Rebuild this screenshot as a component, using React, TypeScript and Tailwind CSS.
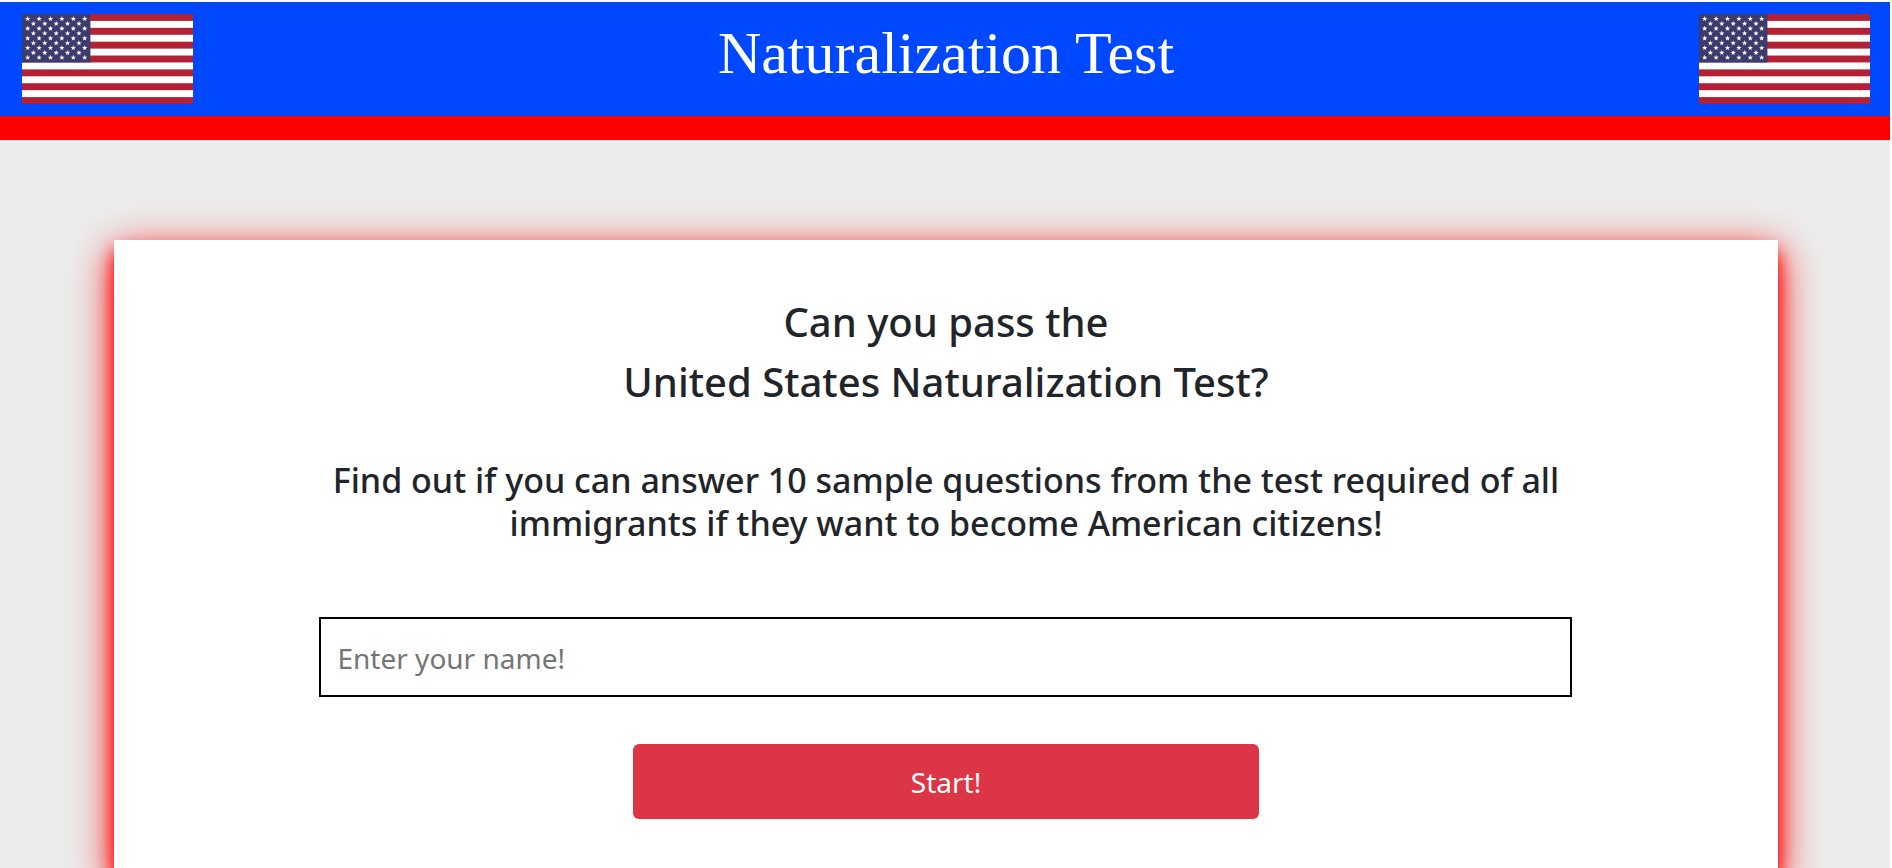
const STRIPES = [0, 1, 2, 3, 4, 5, 6];
const STAR_ROWS = [0, 1, 2, 3, 4, 5, 6, 7, 8];

function starPoints(cx: number, cy: number, r: number) {
  return Array.from({ length: 10 }, (_, i) => {
    const radius = i % 2 === 0 ? r : r * 0.42;
    const angle = (Math.PI / 5) * i - Math.PI / 2;
    return `${(cx + radius * Math.cos(angle)).toFixed(2)},${(cy + radius * Math.sin(angle)).toFixed(2)}`;
  }).join(" ");
}

function Flag() {
  return (
    <svg
      className="h-[90px] w-[171px] shrink-0"
      viewBox="0 0 1235 650"
      preserveAspectRatio="none"
      role="img"
      aria-label="Flag of the United States"
    >
      <rect width="1235" height="650" fill="#fff" />
      {STRIPES.map((i) => (
        <rect key={i} y={i * 100} width="1235" height="50" fill="#b22234" />
      ))}
      <rect width="494" height="350" fill="#3c3b6e" />
      {STAR_ROWS.map((row) =>
        Array.from({ length: row % 2 === 0 ? 6 : 5 }, (_, col) => (
          <polygon
            key={`${row}-${col}`}
            fill="#fff"
            points={starPoints((row % 2 === 0 ? 41.2 : 82.3) + col * 82.3, 35 + row * 35, 20)}
          />
        )),
      )}
    </svg>
  );
}

export default function App() {
  return (
    <div className="relative min-h-screen overflow-hidden border-t-2 border-white bg-[#ececec] font-['Noto_Sans',sans-serif] text-[#212529] after:absolute after:inset-y-0 after:right-0 after:w-0.5 after:bg-white">
      <header className="flex items-start justify-between border-b-24 border-[#ff0000] bg-[#0048ff] px-[22px] py-3">
        <Flag />
        <p className="font-['Liberation_Serif',serif] text-[60px] leading-[78px] text-white">Naturalization Test</p>
        <Flag />
      </header>

      <main className="mx-auto mt-[100px] w-[88%] bg-white px-6 pt-[52px] pb-14 text-center shadow-[0_12px_16px_0_#ff0000,0_12px_40px_0_#ff0000]">
        <h1 className="text-[40px] leading-[60px] font-medium">
          Can you pass the
          <br />
          United States Naturalization Test?
        </h1>
        <form className="mx-auto flex w-full max-w-[1253px] flex-col items-center" onSubmit={(e) => e.preventDefault()}>
          <h2 className="mt-[47px] text-[34px] leading-[43px] font-medium">
            Find out if you can answer 10 sample questions from the test required of all immigrants if they want to
            become American citizens!
          </h2>
          <input
            type="text"
            aria-label="Your name"
            placeholder="Enter your name!"
            className="mt-[72px] h-20 w-full border-2 border-black px-4 pt-0.5 text-[28px] placeholder:text-[#757575]"
          />
          <button type="submit" className="mt-[47px] h-[75px] w-1/2 rounded-md bg-[#dc3545] text-[28px] text-white">
            Start!
          </button>
        </form>
      </main>
    </div>
  );
}
